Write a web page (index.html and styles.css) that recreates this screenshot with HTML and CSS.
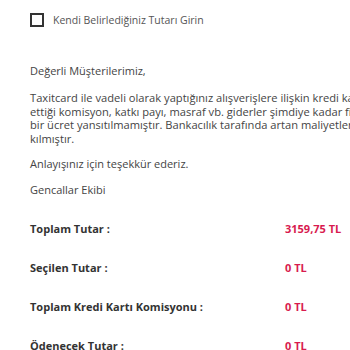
FILE: index.html
```html
<!DOCTYPE html>
<html lang="tr">
<head>
<meta charset="utf-8">
<link rel="stylesheet" href="styles.css">
</head>
<body>
<div class="page">
  <label class="check">
    <span class="box"></span>
    <span class="check-label">Kendi Belirlediğiniz Tutarı Girin</span>
  </label>
  <div class="notice">
    <p class="greet">Değerli Müşterilerimiz,</p>
    <p class="body-text">Taxitcard ile vadeli olarak yaptığınız alışverişlere ilişkin kredi kartı kuruluşlarının tahsil<br>ettiği komisyon, katkı payı, masraf vb. giderler şimdiye kadar firmamız tarafından karşılanmış<br>bir ücret yansıtılmamıştır. Bankacılık tarafında artan maliyetler nedeniyle komisyon uygulaması zorunlu<br>kılmıştır.</p>
    <p class="thanks">Anlayışınız için teşekkür ederiz.</p>
    <p class="sign">Gencallar Ekibi</p>
  </div>
  <div class="totals">
    <div class="row"><span class="lbl">Toplam Tutar :</span><span class="val">3159,75 TL</span></div>
    <div class="row"><span class="lbl">Seçilen Tutar :</span><span class="val">0 TL</span></div>
    <div class="row"><span class="lbl">Toplam Kredi Kartı Komisyonu :</span><span class="val">0 TL</span></div>
    <div class="row"><span class="lbl">Ödenecek Tutar :</span><span class="val">0 TL</span></div>
  </div>
</div>
</body>
</html>
```

FILE: styles.css
```css
html, body {
  margin: 0;
  padding: 0;
  background: #fff;
  overflow: hidden;
}
body {
  font-family: "Open Sans", "Liberation Sans", sans-serif;
  color: #444;
  font-size: 11px;
}
.page {
  padding: 12px 0 0 30px;
  width: 700px;
}
.check {
  display: flex;
  align-items: center;
  gap: 9px;
  height: 15px;
}
.box {
  width: 10px;
  height: 10px;
  border: 2px solid #333;
  box-sizing: content-box;
}
.check-label {
  font-size: 10.5px;
  color: #555;
}
.notice {
  margin-top: 37px;
  line-height: 13.5px;
}
.notice p {
  margin: 0;
  white-space: nowrap;
}
.body-text {
  margin-top: 13.5px !important;
  font-size: 11.15px;
}
.thanks { margin-top: 12px !important; }
.sign { margin-top: 12.5px !important; }
.totals {
  margin-top: 25px;
}
.row {
  display: grid;
  grid-template-columns: 255px auto;
  height: 39px;
  line-height: 14px;
  align-items: start;
}
.lbl {
  font-weight: 700;
  color: #333;
}
.val {
  font-weight: 700;
  color: #d81b4f;
}
```
